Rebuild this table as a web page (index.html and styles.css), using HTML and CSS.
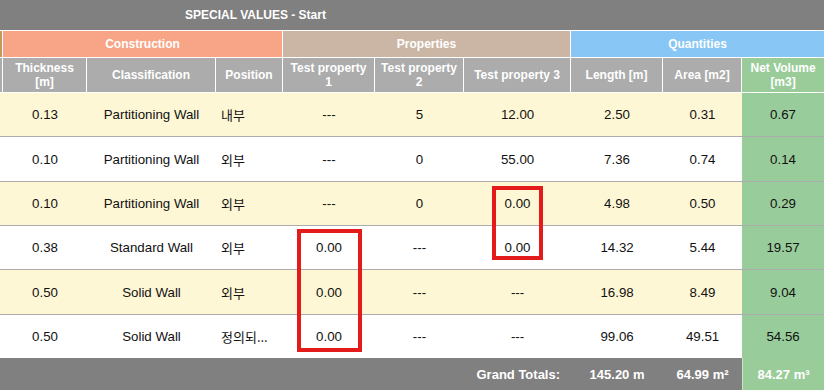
FILE: index.html
```html
<!DOCTYPE html>
<html lang="en">
<head>
<meta charset="utf-8">
<title>Special Values</title>
<link rel="stylesheet" href="styles.css">
</head>
<body>
<div class="sheet">
  <div class="title">SPECIAL VALUES - Start</div>
  <table class="grid">
    <colgroup>
      <col class="c-strip">
      <col class="c-thick">
      <col class="c-class">
      <col class="c-pos">
      <col class="c-tp1">
      <col class="c-tp2">
      <col class="c-tp3">
      <col class="c-len">
      <col class="c-area">
      <col class="c-vol">
    </colgroup>
    <thead>
      <tr class="groups">
        <th class="g-prev"></th>
        <th class="g-con" colspan="3">Construction</th>
        <th class="g-prop" colspan="3">Properties</th>
        <th class="g-qty" colspan="3">Quantities</th>
      </tr>
      <tr class="heads">
        <th></th>
        <th>Thickness<br>[m]</th>
        <th>Classification</th>
        <th>Position</th>
        <th>Test property<br>1</th>
        <th>Test property<br>2</th>
        <th>Test property 3</th>
        <th>Length [m]</th>
        <th>Area [m2]</th>
        <th class="h-vol">Net Volume<br>[m3]</th>
      </tr>
    </thead>
    <tbody>
      <tr class="odd short">
        <td></td><td>0.13</td><td>Partitioning Wall</td><td class="pos">내부</td><td>---</td><td>5</td><td>12.00</td><td>2.50</td><td>0.31</td><td class="vol">0.67</td>
      </tr>
      <tr class="even tall">
        <td></td><td>0.10</td><td>Partitioning Wall</td><td class="pos">외부</td><td>---</td><td>0</td><td>55.00</td><td>7.36</td><td>0.74</td><td class="vol">0.14</td>
      </tr>
      <tr class="odd short">
        <td></td><td>0.10</td><td>Partitioning Wall</td><td class="pos">외부</td><td>---</td><td>0</td><td>0.00</td><td>4.98</td><td>0.50</td><td class="vol">0.29</td>
      </tr>
      <tr class="even short">
        <td></td><td>0.38</td><td>Standard Wall</td><td class="pos">외부</td><td>0.00</td><td>---</td><td>0.00</td><td>14.32</td><td>5.44</td><td class="vol">19.57</td>
      </tr>
      <tr class="odd tall">
        <td></td><td>0.50</td><td>Solid Wall</td><td class="pos">외부</td><td>0.00</td><td>---</td><td>---</td><td>16.98</td><td>8.49</td><td class="vol">9.04</td>
      </tr>
      <tr class="even short last">
        <td></td><td>0.50</td><td>Solid Wall</td><td class="pos">정의되...</td><td>0.00</td><td>---</td><td>---</td><td>99.06</td><td>49.51</td><td class="vol">54.56</td>
      </tr>
    </tbody>
    <tfoot>
      <tr>
        <td class="f-label" colspan="7">Grand Totals:</td>
        <td>145.20 m</td>
        <td>64.99 m²</td>
        <td class="f-vol">84.27 m³</td>
      </tr>
    </tfoot>
  </table>
  <div class="mark mark-a"></div>
  <div class="mark mark-b"></div>
</div>
</body>
</html>
```
FILE: styles.css
```css
html, body {
  margin: 0;
  padding: 0;
  background: #ffffff;
}

.sheet {
  position: relative;
  width: 824px;
  height: 392px;
  overflow: hidden;
  font-family: "Liberation Sans", Arial, "Noto Sans CJK KR", sans-serif;
}

.title {
  height: 30px;
  line-height: 30px;
  background: #808080;
  color: #ffffff;
  font-size: 12px;
  font-weight: bold;
  padding-left: 185px;
  border-bottom: 1px solid #ffffff;
}

.grid {
  width: 824px;
  table-layout: fixed;
  border-collapse: separate;
  border-spacing: 0;
}

.c-strip { width: 3px; }
.c-thick { width: 84px; }
.c-class { width: 129px; }
.c-pos { width: 67px; }
.c-tp1 { width: 92px; }
.c-tp2 { width: 89px; }
.c-tp3 { width: 107px; }
.c-len { width: 92px; }
.c-area { width: 79px; }
.c-vol { width: 82px; }

.grid th {
  color: #ffffff;
  font-size: 12px;
  font-weight: bold;
  text-align: center;
  padding: 0;
  border-right: 1px solid #ffffff;
  border-bottom: 1px solid #ffffff;
  line-height: 14px;
}

.grid th:last-child { border-right: none; }

.groups th { height: 26px; }
.g-prev { background: #c49a5c; }
.g-con { background: #f7a487; }
.g-prop { background: #cbb6a6; }
.g-qty { background: #87c6f5; }

.heads th {
  height: 34px;
  background: #acacac;
}
.heads th.h-vol { background: #99cc99; }

.grid td {
  height: 43px;
  padding: 0;
  text-align: center;
  font-size: 13.3px;
  color: #111111;
  border-bottom: 1px solid #acacac;
  white-space: nowrap;
  overflow: hidden;
}

.grid tr.tall td { height: 44px; }

.grid tr.odd td { background: #fef7d6; }
.grid tr.even td { background: #ffffff; }
.grid tr td.vol { background: #99cc9b; }
.grid tr.last td { border-bottom: none; }

.grid td.pos {
  text-align: left;
  padding-left: 5px;
  font-family: "Noto Sans CJK KR", "Liberation Sans", sans-serif;
  font-size: 13px;
}

.grid tfoot td {
  height: 32px;
  background: #808080;
  color: #ffffff;
  font-weight: bold;
  font-size: 13px;
  border-bottom: none;
}
.grid tfoot td.f-label {
  text-align: right;
  padding-right: 11px;
}
.grid tfoot td.f-vol {
  background: #99cc99;
  border-left: 1px solid #c9e4c9;
}

.mark {
  position: absolute;
  border: 4px solid #e31b1b;
  box-sizing: border-box;
}
.mark-a {
  left: 297px;
  top: 229px;
  width: 65px;
  height: 123px;
}
.mark-b {
  left: 492px;
  top: 186px;
  width: 51px;
  height: 74px;
}
```
